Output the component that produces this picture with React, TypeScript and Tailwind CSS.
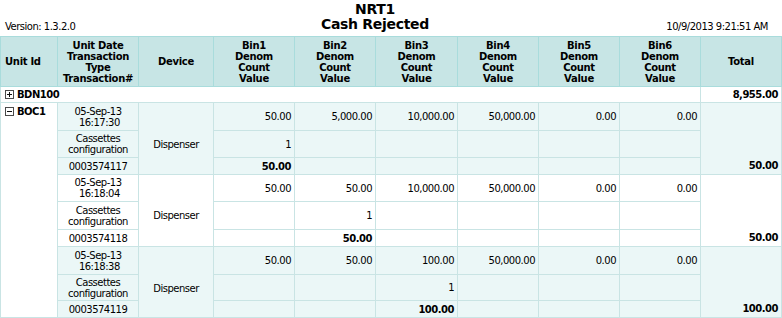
import React from 'react';

type Group = {
  date: string;
  time: string;
  tx: string;
  bins: string[];
  col: number;
  total: string;
  tint: boolean;
  heights: [string, string, string];
};

const groups: Group[] = [
  {
    date: '05-Sep-13',
    time: '16:17:30',
    tx: '0003574117',
    bins: ['50.00', '5,000.00', '10,000.00', '50,000.00', '0.00', '0.00'],
    col: 0,
    total: '50.00',
    tint: true,
    heights: ['h-[28px]', 'h-[27px]', 'h-[17px]'],
  },
  {
    date: '05-Sep-13',
    time: '16:18:04',
    tx: '0003574118',
    bins: ['50.00', '50.00', '10,000.00', '50,000.00', '0.00', '0.00'],
    col: 1,
    total: '50.00',
    tint: false,
    heights: ['h-[27px]', 'h-[28px]', 'h-[17px]'],
  },
  {
    date: '05-Sep-13',
    time: '16:18:38',
    tx: '0003574119',
    bins: ['50.00', '50.00', '100.00', '50,000.00', '0.00', '0.00'],
    col: 2,
    total: '100.00',
    tint: true,
    heights: ['h-[28px]', 'h-[26px]', 'h-[17px]'],
  },
];

const widths = [57, 81, 75, 81, 81, 82, 81, 81, 81, 81];

const cell = 'border border-[#c9e4e4] px-[3px] py-0';
const th = 'border border-[#a9dcdc] px-[3px] py-0 font-bold text-center align-middle tracking-[-0.3px]';

function ToggleIcon({ open }: { open: boolean }) {
  return (
    <svg width="9" height="9" viewBox="0 0 9 9" className="shrink-0">
      <rect x="0.5" y="0.5" width="8" height="8" fill="white" stroke="#4a4a4a" />
      <line x1="2" y1="4.5" x2="7" y2="4.5" stroke="#111" />
      {!open && <line x1="4.5" y1="2" x2="4.5" y2="7" stroke="#111" />}
    </svg>
  );
}

export default function App() {
  return (
    <div className="w-[782px] h-[318px] bg-white text-black font-['DejaVu_Sans',Verdana,sans-serif] text-[10px] leading-[11px] tracking-[-0.5px] overflow-hidden">
      <div className="grid grid-cols-[300px_150px_1fr] items-end h-[36px] pb-[6px]">
        <div className="pl-[5px]">Version: 1.3.2.0</div>
        <div className="text-center font-bold text-[14px] leading-[15px] tracking-[-0.3px] self-start pt-[2px]">
          <div>NRT1</div>
          <div>Cash Rejected</div>
        </div>
        <div className="text-right pr-[14px]">10/9/2013 9:21:51 AM</div>
      </div>

      <table className="table-fixed border-collapse w-[781px]">
        <colgroup>
          {widths.map((w, i) => (
            <col key={i} style={{ width: w }} />
          ))}
        </colgroup>
        <thead>
          <tr className="h-[50px] bg-[#c7e5e5]">
            <th className={`${th} !text-left pl-[4px]`}>Unit Id</th>
            <th className={th}>
              Unit Date
              <br />
              Transaction
              <br />
              Type
              <br />
              Transaction#
            </th>
            <th className={th}>Device</th>
            {[1, 2, 3, 4, 5, 6].map((n) => (
              <th key={n} className={th}>
                Bin{n}
                <br />
                Denom
                <br />
                Count
                <br />
                Value
              </th>
            ))}
            <th className={th}>Total</th>
          </tr>
        </thead>
        <tbody>
          <tr className="h-[16px] bg-white">
            <td colSpan={9} className={`${cell} pl-[4px]`}>
              <div className="flex items-center gap-[3px] font-bold">
                <ToggleIcon open={false} />
                <span>BDN100</span>
              </div>
            </td>
            <td className={`${cell} text-right font-bold`}>8,955.00</td>
          </tr>
          {groups.map((g, gi) => {
            const bg = g.tint ? 'bg-[#ebf7f7]' : 'bg-white';
            return (
              <React.Fragment key={gi}>
                <tr className={`${g.heights[0]} ${bg}`}>
                  {gi === 0 && (
                    <td rowSpan={9} className={`${cell} bg-white align-top pl-[4px] pt-[3px]`}>
                      <div className="flex items-center gap-[3px] font-bold">
                        <ToggleIcon open />
                        <span>BOC1</span>
                      </div>
                    </td>
                  )}
                  <td className={`${cell} text-center align-middle`}>
                    {g.date}
                    <br />
                    &nbsp;{g.time}
                  </td>
                  <td rowSpan={3} className={`${cell} text-center align-top`}>
                    <div className={gi === 1 ? 'pt-[35px]' : 'pt-[36px]'}>Dispenser</div>
                  </td>
                  {g.bins.map((b, bi) => (
                    <td key={bi} className={`${cell} text-right align-middle`}>
                      {b}
                    </td>
                  ))}
                  <td rowSpan={3} className={`${cell} text-right align-bottom pb-[3px] font-bold`}>
                    {g.total}
                  </td>
                </tr>
                <tr className={`${g.heights[1]} ${bg}`}>
                  <td className={`${cell} text-center align-middle`}>
                    Cassettes
                    <br />
                    configuration
                  </td>
                  {g.bins.map((_, bi) => (
                    <td key={bi} className={`${cell} text-right align-middle`}>
                      {bi === g.col ? '1' : ''}
                    </td>
                  ))}
                </tr>
                <tr className={`${g.heights[2]} ${bg}`}>
                  <td className={`${cell} text-center align-middle`}>{g.tx}</td>
                  {g.bins.map((_, bi) => (
                    <td key={bi} className={`${cell} text-right align-middle font-bold`}>
                      {bi === g.col ? g.total : ''}
                    </td>
                  ))}
                </tr>
              </React.Fragment>
            );
          })}
        </tbody>
      </table>
    </div>
  );
}
